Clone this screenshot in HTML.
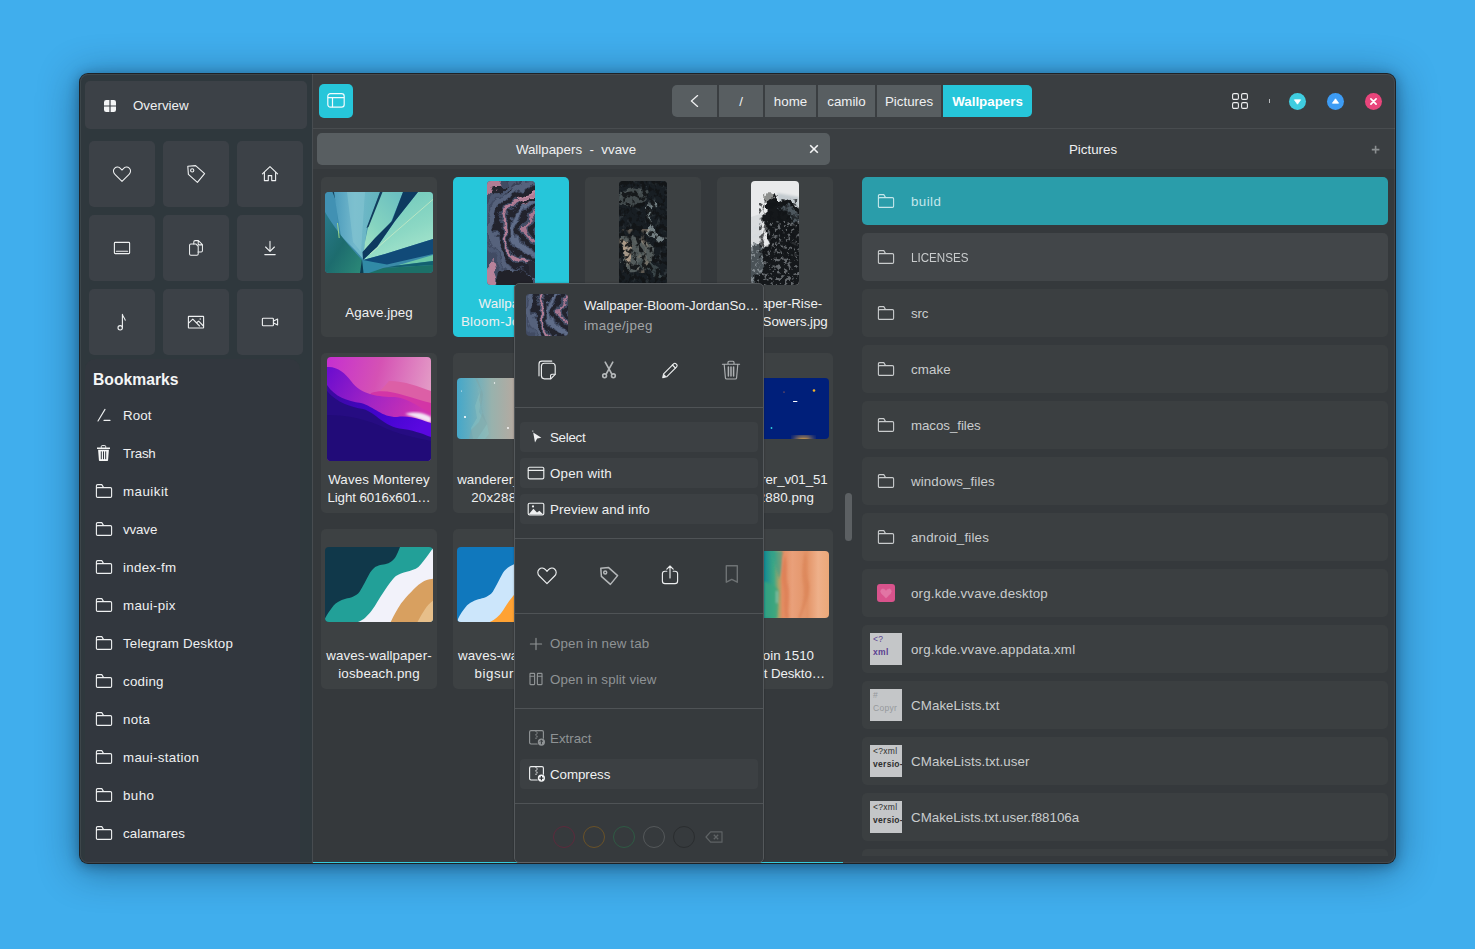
<!DOCTYPE html>
<html lang="en">
<head>
<meta charset="utf-8">
<title>Index - Wallpapers</title>
<style>
*{box-sizing:border-box;margin:0;padding:0}
html,body{width:1475px;height:949px;overflow:hidden}
body{background:#40aeed;font-family:"Liberation Sans",sans-serif;font-size:13.33px;color:#eff0f1;position:relative}
.abs{position:absolute}
#win{position:absolute;left:80px;top:74px;width:1315px;height:789px;border-radius:8px;background:#3a3e41;overflow:hidden;}
#winhl{position:absolute;left:80px;top:74px;width:1315px;height:789px;border-radius:8px;box-shadow:inset 0 0 0 1px rgba(255,255,255,.07);pointer-events:none}
#winshadow{position:absolute;left:79px;top:73px;width:1317px;height:791px;border-radius:9px;background:#1e2226;box-shadow:0 5px 38px 2px rgba(0,25,50,.42),0 2px 12px rgba(0,20,40,.35)}
/* all children of #win positioned in page coords via translate */
#stage{position:absolute;left:-80px;top:-74px;width:1475px;height:949px}
#sidebar{left:80px;top:74px;width:232px;height:789px;background:#2f383d}
#sideline{left:312px;top:74px;width:1px;height:789px;background:#474c50}
.sbtn{position:absolute;background:#3c4147;border-radius:5px}
.sbtn svg{position:absolute;left:22px;top:22px;width:22px;height:22px;overflow:visible}
.ico{fill:none;stroke:#eef0f1;stroke-width:1.12;stroke-linecap:round;stroke-linejoin:round}
.bm{position:absolute;left:123px;height:20px;line-height:22px;white-space:nowrap;color:#eff0f1}
.bmi{position:absolute;left:95px;width:18px;height:18px;overflow:visible}
#hdrline{left:313px;top:128px;width:1082px;height:1px;background:#484c4f}
.crumb{position:absolute;top:85px;height:32px;line-height:34px;background:#585e61;text-align:center;white-space:nowrap;color:#eff0f1}
.card{position:absolute;width:116px;height:160px;background:#3d4143;border-radius:5px}
.lbl{position:absolute;left:0;width:116px;text-align:center;line-height:20px;height:19px;white-space:nowrap;overflow:hidden;color:#eff0f1}
.th{position:absolute;border-radius:4px;overflow:hidden}
.th svg{display:block;width:100%;height:100%}
.row{position:absolute;left:862px;width:526px;height:48px;background:#3b3f41;border-radius:5px}
.row .t{position:absolute;left:49px;top:14px;line-height:22px;height:20px;white-space:nowrap;color:#c9cccd}
.row svg.f{position:absolute;left:15px;top:15px;width:18px;height:18px;overflow:visible}
.fico{fill:none;stroke:#c9cccd;stroke-width:1.1;stroke-linejoin:round;stroke-linecap:round}
.txth{position:absolute;left:8px;top:8px;width:32px;height:32px;background:#c4c6c8;overflow:hidden;font-family:"Liberation Sans",sans-serif;font-size:8.5px;line-height:12.500px;color:#2e2e2e;padding:0 0 0 3px;white-space:nowrap;letter-spacing:.3px}
.txth b{font-weight:700}
#menu{left:514px;top:283px;width:250px;height:580px;background:#363a3d;border:1px solid #54585b;border-radius:5px;box-shadow:0 0 2px rgba(0,0,0,.3)}
.msep{position:absolute;left:515px;width:248px;height:1px;background:#4f5356}
.mrow{position:absolute;left:520px;width:238px;height:30px;border-radius:4px;background:#3c4043}
.mt{position:absolute;left:550px;height:20px;line-height:22px;white-space:nowrap;color:#eff0f1}
.mt.dim{color:#8f9395}
.mi{position:absolute;width:18px;height:18px;overflow:visible}
.mico{fill:none;stroke:#eceeef;stroke-width:1.15;stroke-linecap:round;stroke-linejoin:round}
.dimi{stroke:#8f9395}
.circ{position:absolute;top:826px;width:22px;height:22px;border-radius:50%;border:1px solid #555}
</style>
</head>
<body>
<div id="winshadow"></div>
<div id="win"><div id="stage">

<!-- ===== SIDEBAR ===== -->
<div id="sidebar" class="abs"></div>
<div id="sideline" class="abs"></div>
<div class="abs" style="left:85px;top:359px;width:215px;height:520px;border-radius:10px;background:#32373e"></div>

<div class="sbtn" style="left:85px;top:81px;width:222px;height:48px"></div>
<svg class="abs" style="left:104px;top:100px;width:12px;height:12px" viewBox="0 0 12 12"><g fill="#f4f5f6"><path d="M0 2.2A2.2 2.2 0 0 1 2.2 0H5.4V5.4H0Z"/><path d="M6.6 0H9.8A2.2 2.2 0 0 1 12 2.2V5.4H6.6Z"/><path d="M0 6.6H5.4V12H2.2A2.2 2.2 0 0 1 0 9.8Z"/><path d="M6.6 6.6H12V9.8A2.2 2.2 0 0 1 9.8 12H6.6Z"/></g></svg>
<div class="abs" style="left:133px;top:96px;height:20px;line-height:20px;white-space:nowrap">Overview</div>

<div class="sbtn" style="left:89px;top:141px;width:66px;height:66px"><svg viewBox="0 0 22 22"><path class="ico" transform="translate(11 11.400) scale(.93) translate(-11 -11)" d="M11 18.6 3.4 11C1.3 8.9 1.3 5.9 3.2 4.2 5 2.6 7.8 2.9 9.5 4.7L11 6.3l1.5-1.6c1.7-1.8 4.5-2.1 6.3-.5 1.9 1.7 1.9 4.7-.2 6.8Z"/></svg></div>
<div class="sbtn" style="left:163px;top:141px;width:66px;height:66px"><svg viewBox="0 0 22 22"><path class="ico" d="M2.8 3.2 10.6 2.6 19.6 10.6 12.4 19.4 3.4 11.4Z"/><circle class="ico" cx="7.2" cy="7.4" r="1.6"/></svg></div>
<div class="sbtn" style="left:237px;top:141px;width:66px;height:66px"><svg viewBox="0 0 22 22"><path class="ico" d="M3.400 10.800 11 3.600l7.600 7.200M5.400 9.200v8.400h3.900v-5h3.400v5h3.900V9.200"/></svg></div>

<div class="sbtn" style="left:89px;top:215px;width:66px;height:66px"><svg viewBox="0 0 22 22"><rect class="ico" x="3.400" y="5.400" width="15.200" height="11.200" rx=".8"/><path class="ico" d="M5.400 14.300h11.200"/></svg></div>
<div class="sbtn" style="left:163px;top:215px;width:66px;height:66px"><svg viewBox="0 0 22 22"><g transform="translate(11 11) scale(.92) translate(-11 -11.200)"><path class="ico" d="M8.6 6.8V4.6c0-.8.6-1.4 1.4-1.4h3.6l4.4 4.4v6.6c0 .8-.6 1.4-1.4 1.4h-3.4M13.4 3.4v4.4h4.4"/><path class="ico" d="M5.4 6.8h5.400l2.600 2.600v8.200c0 .8-.6 1.400-1.400 1.400H5.400c-.8 0-1.400-.6-1.400-1.400V8.200c0-.8.6-1.400 1.400-1.400Z"/></g></svg></div>
<div class="sbtn" style="left:237px;top:215px;width:66px;height:66px"><svg viewBox="0 0 22 22"><path class="ico" d="M11 4.400v9.800M6.600 10l4.400 4.400 4.400-4.400M5.800 17.600h10.400"/></svg></div>

<div class="sbtn" style="left:89px;top:289px;width:66px;height:66px"><svg viewBox="0 0 22 22"><circle class="ico" cx="9.200" cy="16.800" r="2.200"/><path class="ico" d="M11.400 16.800V3.400c.4 2.200 2.200 3.400 2.800 5.800"/></svg></div>
<div class="sbtn" style="left:163px;top:289px;width:66px;height:66px"><svg viewBox="0 0 22 22"><rect class="ico" x="3.400" y="5.400" width="15.200" height="11.600" rx=".4"/><path class="ico" d="M3.600 12.200 7.800 8.200l6.800 6.800M11.600 11.800l2.100-1.700 4.700 4.900"/><circle cx="15.200" cy="8" r=".7" fill="#eef0f1"/></svg></div>
<div class="sbtn" style="left:237px;top:289px;width:66px;height:66px"><svg viewBox="0 0 22 22"><rect class="ico" x="3.400" y="7.300" width="11" height="7.400" rx=".8"/><path class="ico" d="M14.600 10 18.600 8v6L14.600 12"/></svg></div>

<div class="abs" style="left:93px;top:368px;height:24px;line-height:24px;font-size:15.7px;font-weight:700;white-space:nowrap;color:#f4f5f6">Bookmarks</div>

<svg class="bmi" style="top:406px" viewBox="0 0 18 18"><path class="ico" d="M3 15 10 3.400M9 14.400h6"/></svg>
<div class="bm" style="letter-spacing:0.09px;top:405px">Root</div>
<svg class="bmi" style="top:444px" viewBox="0 0 18 18"><path fill="#f6f7f7" d="M2 3.600h13v1.500H2ZM3.100 5.800h10.800l-.8 10.200c0 .6-.5 1-1.100 1H5c-.6 0-1.100-.4-1.100-1Z"/><path fill="none" stroke="#f6f7f7" stroke-width="1" d="M6.300 3.800V2.400c0-.5.300-.8.800-.8h2.800c.5 0 .8.300.8.800v1.400"/><path stroke="#32373e" stroke-width="1" d="M6.300 7.400v7.800M8.500 7.400v7.800M10.700 7.400v7.800"/></svg>
<div class="bm" style="letter-spacing:-0.2px;top:443px">Trash</div>
<svg class="bmi" style="top:482px" viewBox="0 0 18 18"><path class="ico" d="M1.400 6.800V3.800c0-.7.500-1.200 1.200-1.200h4.200l1.800 3M2.600 5.600h12.800c.7 0 1.200.5 1.200 1.200v7.400c0 .7-.5 1.200-1.200 1.200H2.600c-.7 0-1.200-.5-1.200-1.200V6.800c0-.7.500-1.200 1.200-1.200Z"/></svg>
<div class="bm" style="letter-spacing:0.47px;top:481px">mauikit</div>
<svg class="bmi" style="top:520px" viewBox="0 0 18 18"><path class="ico" d="M1.400 6.800V3.800c0-.7.500-1.200 1.200-1.200h4.200l1.800 3M2.600 5.600h12.800c.7 0 1.200.5 1.200 1.200v7.400c0 .7-.5 1.200-1.200 1.200H2.600c-.7 0-1.200-.5-1.200-1.200V6.800c0-.7.500-1.200 1.200-1.200Z"/></svg>
<div class="bm" style="letter-spacing:-0.13px;top:519px">vvave</div>
<svg class="bmi" style="top:558px" viewBox="0 0 18 18"><path class="ico" d="M1.400 6.800V3.800c0-.7.500-1.200 1.200-1.200h4.200l1.800 3M2.600 5.600h12.800c.7 0 1.200.5 1.200 1.200v7.400c0 .7-.5 1.200-1.200 1.200H2.600c-.7 0-1.200-.5-1.200-1.200V6.800c0-.7.500-1.200 1.200-1.200Z"/></svg>
<div class="bm" style="letter-spacing:0.29px;top:557px">index-fm</div>
<svg class="bmi" style="top:596px" viewBox="0 0 18 18"><path class="ico" d="M1.400 6.800V3.800c0-.7.500-1.200 1.200-1.200h4.200l1.800 3M2.600 5.600h12.800c.7 0 1.200.5 1.200 1.200v7.400c0 .7-.5 1.200-1.200 1.200H2.600c-.7 0-1.200-.5-1.200-1.200V6.800c0-.7.500-1.200 1.200-1.200Z"/></svg>
<div class="bm" style="letter-spacing:0.3px;top:595px">maui-pix</div>
<svg class="bmi" style="top:634px" viewBox="0 0 18 18"><path class="ico" d="M1.400 6.800V3.800c0-.7.500-1.200 1.200-1.200h4.200l1.800 3M2.600 5.600h12.800c.7 0 1.200.5 1.200 1.200v7.400c0 .7-.5 1.200-1.200 1.200H2.600c-.7 0-1.200-.5-1.200-1.200V6.800c0-.7.500-1.200 1.200-1.200Z"/></svg>
<div class="bm" style="letter-spacing:0.16px;top:633px">Telegram Desktop</div>
<svg class="bmi" style="top:672px" viewBox="0 0 18 18"><path class="ico" d="M1.400 6.800V3.800c0-.7.500-1.200 1.200-1.200h4.200l1.800 3M2.600 5.600h12.800c.7 0 1.200.5 1.200 1.200v7.400c0 .7-.5 1.200-1.200 1.200H2.600c-.7 0-1.200-.5-1.200-1.200V6.800c0-.7.500-1.200 1.200-1.200Z"/></svg>
<div class="bm" style="letter-spacing:0.25px;top:671px">coding</div>
<svg class="bmi" style="top:710px" viewBox="0 0 18 18"><path class="ico" d="M1.400 6.800V3.800c0-.7.500-1.200 1.200-1.200h4.200l1.800 3M2.600 5.600h12.800c.7 0 1.200.5 1.200 1.200v7.400c0 .7-.5 1.200-1.200 1.200H2.600c-.7 0-1.200-.5-1.200-1.200V6.800c0-.7.500-1.200 1.200-1.200Z"/></svg>
<div class="bm" style="letter-spacing:0.31px;top:709px">nota</div>
<svg class="bmi" style="top:748px" viewBox="0 0 18 18"><path class="ico" d="M1.400 6.800V3.800c0-.7.500-1.200 1.200-1.200h4.200l1.800 3M2.600 5.600h12.800c.7 0 1.200.5 1.200 1.200v7.400c0 .7-.5 1.200-1.200 1.200H2.600c-.7 0-1.200-.5-1.200-1.200V6.800c0-.7.500-1.200 1.200-1.200Z"/></svg>
<div class="bm" style="letter-spacing:0.3px;top:747px">maui-station</div>
<svg class="bmi" style="top:786px" viewBox="0 0 18 18"><path class="ico" d="M1.400 6.800V3.800c0-.7.500-1.200 1.200-1.200h4.200l1.800 3M2.600 5.600h12.800c.7 0 1.200.5 1.200 1.200v7.400c0 .7-.5 1.200-1.200 1.200H2.600c-.7 0-1.200-.5-1.200-1.200V6.800c0-.7.500-1.200 1.200-1.200Z"/></svg>
<div class="bm" style="letter-spacing:0.41px;top:785px">buho</div>
<svg class="bmi" style="top:824px" viewBox="0 0 18 18"><path class="ico" d="M1.400 6.800V3.800c0-.7.500-1.200 1.200-1.200h4.200l1.800 3M2.600 5.600h12.800c.7 0 1.200.5 1.200 1.200v7.400c0 .7-.5 1.200-1.200 1.200H2.600c-.7 0-1.200-.5-1.200-1.200V6.800c0-.7.500-1.200 1.200-1.200Z"/></svg>
<div class="bm" style="letter-spacing:0.06px;top:823px">calamares</div>


<!-- ===== HEADER ===== -->
<div id="hdrline" class="abs"></div>
<div class="abs" style="left:319px;top:84px;width:34px;height:34px;border-radius:5px;background:#26c6da"></div>
<svg class="abs" style="left:327px;top:92px;width:18px;height:18px;overflow:visible" viewBox="0 0 18 18"><rect x=".8" y="1.600" width="16.400" height="13.600" rx="2.600" fill="none" stroke="#f2fcfe" stroke-width="1.200"/><path d="M.8 5.600h16.400M5.500 5.600v9.600" fill="none" stroke="#f2fcfe" stroke-width="1.200"/></svg>

<div class="crumb" style="left:672px;width:45px;border-radius:5px 0 0 5px"></div>
<svg class="abs" style="left:687px;top:92px;width:14px;height:18px;overflow:visible" viewBox="0 0 14 18"><path d="M10.600 3.600 4.400 9l6.200 5.400" fill="none" stroke="#eff0f1" stroke-width="1.300" stroke-linecap="round" stroke-linejoin="round"/></svg>
<div class="crumb" style="left:719px;width:44px">/</div>
<div class="crumb" style="left:765px;width:51px">home</div>
<div class="crumb" style="left:818px;width:57px">camilo</div>
<div class="crumb" style="left:877px;width:64px">Pictures</div>
<div class="crumb" style="left:943px;width:89px;background:#26c6da;font-weight:700;border-radius:0 5px 5px 0;color:#fff">Wallpapers</div>

<svg class="abs" style="left:1232px;top:93px;width:16px;height:16px;overflow:visible" viewBox="0 0 16 16"><g fill="none" stroke="#eff0f1" stroke-width="1.100"><rect x=".6" y=".6" width="5.800" height="5.800" rx="1.400"/><rect x="9.600" y=".6" width="5.800" height="5.800" rx="1.400"/><rect x=".6" y="9.600" width="5.800" height="5.800" rx="1.400"/><rect x="9.600" y="9.600" width="5.800" height="5.800" rx="1.400"/></g></svg>
<div class="abs" style="left:1269px;top:99px;width:1px;height:4px;background:#b9bcbe"></div>
<div class="abs" style="left:1289px;top:92.500px;width:17px;height:17px;border-radius:50%;background:#3fcde0"></div>
<svg class="abs" style="left:1289px;top:92.500px;width:17px;height:17px" viewBox="0 0 17 17"><path d="M5.400 6.800h6.200L8.500 11.200Z" fill="#fff" stroke="#fff" stroke-width=".8" stroke-linejoin="round"/></svg>
<div class="abs" style="left:1327px;top:92.500px;width:17px;height:17px;border-radius:50%;background:#3d9cf4"></div>
<svg class="abs" style="left:1327px;top:92.500px;width:17px;height:17px" viewBox="0 0 17 17"><path d="M5.400 10.200h6.200L8.500 5.800Z" fill="#fff" stroke="#fff" stroke-width=".8" stroke-linejoin="round"/></svg>
<div class="abs" style="left:1365px;top:92.500px;width:17px;height:17px;border-radius:50%;background:#e8457b"></div>
<svg class="abs" style="left:1365px;top:92.500px;width:17px;height:17px" viewBox="0 0 17 17"><path d="M5.900 5.900l5.200 5.200M11.100 5.900l-5.200 5.200" fill="none" stroke="#fff" stroke-width="1.700" stroke-linecap="round"/></svg>

<!-- tab bars -->
<div class="abs" style="left:317px;top:133px;width:513px;height:32px;border-radius:5px;background:#585e61"></div>
<div class="abs" style="left:317px;top:140px;width:513px;height:20px;line-height:20px;text-align:center;white-space:pre;padding-left:5px">Wallpapers  -  vvave</div>
<svg class="abs" style="left:809px;top:144px;width:10px;height:10px;overflow:visible" viewBox="0 0 10 10"><path d="M1.200 1.200l7.600 7.600M8.800 1.200l-7.600 7.600" fill="none" stroke="#f4f5f6" stroke-width="1.600" stroke-linecap="butt"/></svg>
<div class="abs" style="left:855px;top:140px;width:476px;height:20px;line-height:20px;text-align:center;white-space:nowrap">Pictures</div>
<svg class="abs" style="left:1371px;top:144.500px;width:9px;height:9px;overflow:visible" viewBox="0 0 9 9"><path d="M4.600 .8v7.600M.8 4.600h7.600" fill="none" stroke="#8b8f91" stroke-width="1.600"/></svg>
<!-- content background (darker) -->
<div class="abs" style="left:313px;top:169px;width:1082px;height:694px;background:#35393c"></div>


<!-- ===== LEFT PANE ===== -->
<svg width="0" height="0" style="position:absolute"><defs>
<filter color-interpolation-filters="sRGB" id="marble" x="0" y="0" width="100%" height="100%"><feTurbulence type="fractalNoise" baseFrequency="0.045 0.03" numOctaves="4" seed="7" result="n"/><feDisplacementMap in="SourceGraphic" in2="n" scale="22" xChannelSelector="R" yChannelSelector="G"/></filter>
<filter color-interpolation-filters="sRGB" id="marble2" x="0" y="0" width="100%" height="100%"><feTurbulence type="fractalNoise" baseFrequency="0.06 0.05" numOctaves="4" seed="3" result="n"/><feDisplacementMap in="SourceGraphic" in2="n" scale="18" xChannelSelector="R" yChannelSelector="G"/></filter>
<filter color-interpolation-filters="sRGB" id="spLight" x="0" y="0" width="100%" height="100%"><feTurbulence type="fractalNoise" baseFrequency="0.16 0.12" numOctaves="3" seed="11"/><feColorMatrix type="matrix" values="0 0 0 0 .5  0 0 0 0 .55  0 0 0 0 .56  6 0 0 0 -3.55"/></filter>
<filter color-interpolation-filters="sRGB" id="spBeige" x="0" y="0" width="100%" height="100%"><feTurbulence type="fractalNoise" baseFrequency="0.1 0.07" numOctaves="3" seed="23"/><feColorMatrix type="matrix" values="0 0 0 0 .72  0 0 0 0 .64  0 0 0 0 .55  0 6 0 0 -3.2"/></filter>
<filter color-interpolation-filters="sRGB" id="spDark" x="0" y="0" width="100%" height="100%"><feTurbulence type="fractalNoise" baseFrequency="0.22 0.18" numOctaves="3" seed="5"/><feColorMatrix type="matrix" values="0 0 0 0 .07  0 0 0 0 .08  0 0 0 0 .09  7 0 0 0 -3.3"/></filter>
<filter color-interpolation-filters="sRGB" id="spWhite" x="0" y="0" width="100%" height="100%"><feTurbulence type="fractalNoise" baseFrequency="0.3 0.26" numOctaves="3" seed="31"/><feColorMatrix type="matrix" values="0 0 0 0 .82  0 0 0 0 .85  0 0 0 0 .87  0 8 0 0 -4.3"/></filter>
<filter color-interpolation-filters="sRGB" id="disp30" x="-10%" y="-10%" width="120%" height="120%"><feTurbulence type="fractalNoise" baseFrequency="0.09 0.07" numOctaves="4" seed="9" result="n"/><feDisplacementMap in="SourceGraphic" in2="n" scale="16" xChannelSelector="R" yChannelSelector="G"/></filter>
<linearGradient id="gRise" gradientUnits="userSpaceOnUse" x1="0" y1="10" x2="52" y2="84"><stop offset="0" stop-color="#eceded"/><stop offset=".3" stop-color="#dfe2e3"/><stop offset=".42" stop-color="#596168"/><stop offset=".52" stop-color="#15181b"/><stop offset="1" stop-color="#0d0f11"/></linearGradient>
<filter id="soft"><feGaussianBlur stdDeviation="1.2"/></filter>
<filter id="soft3"><feGaussianBlur stdDeviation="3"/></filter>
<linearGradient id="gAg1" x1=".8" y1="0" x2=".2" y2="1"><stop offset="0" stop-color="#6cc0c0"/><stop offset=".6" stop-color="#86d4c0"/><stop offset="1" stop-color="#a2e2c4"/></linearGradient><linearGradient id="gAgT" x1="0" y1="0" x2="1" y2="1"><stop offset="0" stop-color="#2a7a8c"/><stop offset=".5" stop-color="#1d6c6e"/><stop offset="1" stop-color="#2c8a78"/></linearGradient>
<linearGradient id="gAg2" x1="0" y1="0" x2="1" y2="0"><stop offset="0" stop-color="#4d9cbc"/><stop offset=".45" stop-color="#72b8cc"/><stop offset="1" stop-color="#62b4bc"/></linearGradient>
<linearGradient id="gAg3" x1=".3" y1="0" x2=".7" y2="1"><stop offset="0" stop-color="#70c8bc"/><stop offset=".6" stop-color="#8cd8c4"/><stop offset="1" stop-color="#a8e6cc"/></linearGradient>
<linearGradient id="gMo1" x1="0" y1="0" x2="1" y2=".25"><stop offset="0" stop-color="#c52fd0"/><stop offset=".5" stop-color="#d552b4"/><stop offset="1" stop-color="#e39ac6"/></linearGradient>
<linearGradient id="gMo2" x1="0" y1="0" x2="1" y2=".4"><stop offset="0" stop-color="#6a0ccf"/><stop offset=".55" stop-color="#a425c3"/><stop offset="1" stop-color="#cf33b0"/></linearGradient>
<linearGradient id="gMo3" x1="0" y1="0" x2="1" y2=".5"><stop offset="0" stop-color="#3a0a9a"/><stop offset=".6" stop-color="#4304cf"/><stop offset="1" stop-color="#5a08e0"/></linearGradient>
<linearGradient id="gWa" x1="0" y1="0" x2="1" y2="0"><stop offset="0" stop-color="#45a7c9"/><stop offset=".16" stop-color="#6cafbd"/><stop offset=".32" stop-color="#98b2ad"/><stop offset=".52" stop-color="#b3aaa1"/><stop offset="1" stop-color="#bba79b"/></linearGradient>
<radialGradient id="gGlow" cx=".56" cy="1.02" r=".3"><stop offset="0" stop-color="#f0b040"/><stop offset=".35" stop-color="#c09048" stop-opacity=".8"/><stop offset="1" stop-color="#00207a" stop-opacity="0"/></radialGradient>
<linearGradient id="gWc" x1="0" y1="0" x2="1" y2="0"><stop offset="0" stop-color="#0b6f82"/><stop offset=".4" stop-color="#128a94"/><stop offset=".49" stop-color="#3fa884"/><stop offset=".535" stop-color="#a9a268"/><stop offset=".57" stop-color="#e38d62"/><stop offset=".66" stop-color="#e9a07a"/><stop offset=".8" stop-color="#e39468"/><stop offset=".9" stop-color="#eeb08a"/><stop offset="1" stop-color="#eba878"/></linearGradient>
</defs></svg>

<!-- row 1 -->
<div class="card" style="left:321px;top:177px"><div class="lbl" style="top:126px;letter-spacing:0.10px">Agave.jpeg</div></div>
<div class="th" style="left:325px;top:192px;width:108px;height:81px"><svg viewBox="0 0 108 81" preserveAspectRatio="none">
<rect width="108" height="81" fill="#3a8aa8"/>
<path d="M0 0H10L14 40 0 22Z" fill="#4191b3"/>
<path d="M7.500 0H10L11 9Z" fill="#14405a"/>
<path d="M9 0H55L42 36 38 67 30 58 16 44 12 20Z" fill="url(#gAg2)"/>
<path d="M22 0H40L36 60 28 50Z" fill="#86c6d2" opacity=".55"/>
<path d="M0 20C8 34 22 52 37 68L35 81H0Z" fill="url(#gAgT)"/>
<path d="M12.500 31 14.200 46" stroke="#a6dc8c" stroke-width=".9"/>
<path d="M38 68 80 60 62 72 46 81H35Z" fill="#318aa6"/>
<path d="M57 0H78L66 30 38 66 40 50 43 35Z" fill="url(#gAg1)"/>
<path d="M55 0H57.500L43.500 35 41.500 36Z" fill="#123c5c"/>
<path d="M93 0H108V47L60 62 38 68 52 55 70 29Z" fill="url(#gAg3)"/>
<path d="M78 0H93L70 29 52 55 38 68 37.500 60 50 46 67 29Z" fill="#0e3a60"/>
<path d="M108 7.400 45 62" stroke="#dcf0c4" stroke-width=".7" opacity=".85"/>
<path d="M108 47V62L62 72.500 48 70 38 68 60 62Z" fill="#114a78"/>
<path d="M108 63V69L72 73.500Z" fill="#6cc8a8"/>
<path d="M108 69V73L58 76 72 73.500Z" fill="#136070"/>
<path d="M108 73V81H44L58 76Z" fill="#1c7068"/>
<path d="M37 67 38.500 81H35Z" fill="#0c3c50"/>
</svg></div>

<div class="card" style="left:453px;top:177px;background:#26c6da"><div class="lbl" style="top:117px;letter-spacing:0.10px">Wallpaper-</div><div class="lbl" style="top:135px;letter-spacing:.3px">Bloom-Jordan…</div></div>
<div class="th" style="left:487px;top:181px;width:48px;height:104px"><svg viewBox="0 0 48 104" preserveAspectRatio="none">
<rect width="48" height="104" fill="#414b63"/>
<g filter="url(#marble2)" fill="none">
<path d="M-4 -4H14L8 12 -4 20Z" fill="#b07c94"/>
<path d="M4 2 20 2 24 10 8 12Z" fill="#24252f"/>
<path d="M22 -2 52 -2V10L30 20Z" fill="#3a4258"/>
<path d="M30 14 50 4V16L34 26Z" fill="#c08aa0"/>
<circle cx="54" cy="48" r="9" stroke="#23242e" stroke-width="5"/>
<circle cx="54" cy="48" r="15" stroke="#a87690" stroke-width="2.500"/>
<circle cx="54" cy="48" r="21" stroke="#22232d" stroke-width="5"/>
<circle cx="54" cy="48" r="27" stroke="#5f6c88" stroke-width="4"/>
<circle cx="54" cy="48" r="32" stroke="#23242e" stroke-width="4"/>
<circle cx="54" cy="48" r="37" stroke="#b07c94" stroke-width="3"/>
<circle cx="54" cy="48" r="43" stroke="#22232d" stroke-width="5"/>
<circle cx="54" cy="48" r="49" stroke="#56627c" stroke-width="5"/>
<circle cx="54" cy="48" r="55" stroke="#4c5872" stroke-width="4"/>
<path d="M12 90C22 86 36 88 44 96V108H10Z" fill="#212129"/>
<path d="M-4 86 6 84 10 108H-4Z" fill="#b8829a"/>
<path d="M40 84 52 80V100L44 96Z" fill="#2a2b36"/>
</g>
</svg></div>

<div class="card" style="left:585px;top:177px"></div>
<div class="th" style="left:619px;top:181px;width:48px;height:104px"><svg viewBox="0 0 48 104" preserveAspectRatio="none">
<rect width="48" height="104" fill="#181e23"/>
<g filter="url(#disp30)">
<path d="M0 10C10 4 24 6 30 12 26 22 10 28 0 24Z" fill="#5f6868" opacity=".6"/>
<path d="M31 18C34 30 30 40 34 46 40 50 46 54 47 60 40 64 30 56 28 44 28 32 30 24 31 18Z" fill="#7e8b8e" opacity=".9"/>
<path d="M2 56C12 52 26 60 38 72 32 88 12 94 2 86Z" fill="#6c7573" opacity=".7"/>
<path d="M4 60C10 58 15 68 13 84 6 86 2 78 2 68Z" fill="#b39f8a" opacity=".9"/>
<path d="M18 78C30 74 42 82 46 94 34 98 24 92 18 86Z" fill="#414c4f" opacity=".85"/>
</g>
<rect width="48" height="104" filter="url(#spLight)" opacity=".2"/>
<rect y="48" width="32" height="44" filter="url(#spBeige)" opacity=".45"/>
<rect width="48" height="104" filter="url(#spDark)" opacity=".9"/>
</svg></div>

<div class="card" style="left:717px;top:177px"><div class="lbl" style="top:117px;letter-spacing:-0.05px">Wallpaper-Rise-</div><div class="lbl" style="top:135px;letter-spacing:-0.09px">JordanSowers.jpg</div></div>
<div class="th" style="left:751px;top:181px;width:48px;height:104px"><svg viewBox="0 0 48 104" preserveAspectRatio="none">
<rect width="48" height="104" fill="#e9eaeb"/>
<path d="M26 12 48 16V40L30 30Z" fill="#c3cacf" filter="url(#soft)"/>
<path d="M0 36 12 32 10 66 0 80Z" fill="#d9dcde"/>
<g filter="url(#disp30)">
<path d="M17 16C20 12 24 12 28 17L52 28V110H-4V98C4 88 9 76 13 62 17 48 14 30 17 16Z" fill="#15181b"/>
<path d="M-4 66C4 60 10 64 14 74 18 88 10 100 -4 104Z" fill="#4a5257"/>
<path d="M30 24C38 22 46 30 50 38 44 44 36 40 30 24Z" fill="#4c565d"/>
<path d="M12 13C16 10 22 11 24 15 20 19 15 18 12 13Z" fill="#8d8f8d"/>
</g>
<rect y="40" width="48" height="64" filter="url(#spWhite)" opacity=".42"/>
<rect x="8" y="18" width="40" height="60" filter="url(#spDark)" opacity=".7"/>
</svg></div>

<!-- row 2 -->
<div class="card" style="left:321px;top:353px"><div class="lbl" style="top:117px;letter-spacing:0.16px">Waves Monterey</div><div class="lbl" style="top:135px;letter-spacing:-0.09px">Light 6016x601…</div></div>
<div class="th" style="left:327px;top:357px;width:104px;height:104px"><svg viewBox="0 0 104 104" preserveAspectRatio="none">
<rect width="104" height="104" fill="url(#gMo1)"/>
<path d="M62 24C78 24 92 30 104 34V60H30Z" fill="#dc5fa6"/>
<path d="M44 36C60 30 80 40 104 46V70H30Z" fill="#d335a6"/>
<path d="M0 10C10 9 18 16 24 24 34 38 52 40 68 40 84 42 94 52 104 56V80H0Z" fill="url(#gMo2)"/>
<path d="M78 57C88 54 98 56 104 60V66C96 64 88 60 78 57Z" fill="#f3e6f6" filter="url(#soft)"/>
<path d="M0 28C8 40 20 44 34 46 48 50 54 60 70 60 84 58 96 64 104 66V90H0Z" fill="url(#gMo3)"/>
<path d="M0 34C10 46 24 50 36 52 50 56 56 70 76 72 90 74 98 78 104 80V104H0Z" fill="#260c82"/>
<path d="M0 58C20 58 40 62 60 72 80 80 96 82 104 84V104H0Z" fill="#210b78"/>
</svg></div>

<div class="card" style="left:453px;top:353px"><div class="lbl" style="top:117px;letter-spacing:0.06px">wanderer_v01_51</div><div class="lbl" style="top:135px;letter-spacing:0.23px">20x2880.png</div></div>
<div class="th" style="left:457px;top:378px;width:108px;height:61px"><svg viewBox="0 0 108 61" preserveAspectRatio="none">
<rect width="108" height="61" fill="url(#gWa)"/>
<path d="M16 61 14 50 20 40 18 28 22 16 20 6 24 22 22 34 30 46 32 56 28 61Z" fill="#8fc4c0" opacity=".45"/>
<path d="M18 0 24 12 22 22 26 34 22 44 14 52 12 61H20L30 46 24 30 26 16 20 0Z" fill="#7fa6a8" opacity=".5"/>
<g fill="#fff"><circle cx="8" cy="39" r="1.100"/><circle cx="37.500" cy="5" r=".7"/><circle cx="51" cy="50" r=".9"/><circle cx="4.500" cy="13" r=".5"/></g>
</svg></div>

<div class="card" style="left:585px;top:353px"></div>

<div class="card" style="left:717px;top:353px"><div class="lbl" style="top:117px;letter-spacing:-0.10px">wanderer_v01_51</div><div class="lbl" style="top:135px;letter-spacing:0.08px">20x2880.png</div></div>
<div class="th" style="left:721px;top:378px;width:108px;height:61px"><svg viewBox="0 0 108 61" preserveAspectRatio="none">
<rect width="108" height="61" fill="#001f7a"/>
<ellipse cx="82.500" cy="62" rx="10" ry="3.500" fill="#e9a83e" filter="url(#soft3)"/><ellipse cx="82.500" cy="62.500" rx="5" ry="1.500" fill="#f2b64a" filter="url(#soft)"/>
<circle cx="93" cy="12.500" r="1.300" fill="#f5b52a"/><circle cx="63" cy="14" r=".6" fill="#f08040"/><path d="M72.500 23.500h3.400" stroke="#fff" stroke-width="1.100" stroke-linecap="round"/><circle cx="50.500" cy="50" r=".9" fill="#30d0e0"/>
</svg></div>

<!-- row 3 -->
<div class="card" style="left:321px;top:529px"><div class="lbl" style="top:117px;letter-spacing:0.11px">waves-wallpaper-</div><div class="lbl" style="top:135px;letter-spacing:0.19px">iosbeach.png</div></div>
<div class="th" style="left:325px;top:547px;width:108px;height:75px"><svg viewBox="0 0 108 75.500" preserveAspectRatio="none">
<rect width="108" height="75.500" fill="#10384a"/>
<path d="M75 0C72 8 70 12 67 14 62 18 58 17 53.600 18.500 49 20 47 23 45 26 41 33 38 40 34.600 45 31 50 25 51 20.700 52 15 53.500 11 56 8.600 59 5 64 2 68 0 72V75.500H108V0Z" fill="#22a098"/>
<path d="M108 1C105 5 102 10 98.500 14 95 19 92 22 88 23 83 25 80 25.500 76 26.600 72 28 69.500 30 67.400 33 64 37 61.500 41 58.800 45 54 52 51 58 46.700 64 42 70 38 74 33 75.500H108Z" fill="#f2f2fa"/>
<path d="M108 32C103 32.500 100 33.500 96.800 35.800 92 39 89 42 86.400 45 82 49 79 53 76 57 72 63 69 69 65.700 75.500H108Z" fill="#d8a060"/>
<path d="M108 54C105 56 102 59 100 62.600 97 67 95 71 92.500 75.500H108Z" fill="#e7bf8a"/>
</svg></div>

<div class="card" style="left:453px;top:529px"><div class="lbl" style="top:117px;letter-spacing:0.14px">waves-wallpaper-</div><div class="lbl" style="top:135px;text-align:left;padding-left:21.600px;letter-spacing:.5px">bigsur.png</div></div>
<div class="th" style="left:457px;top:547px;width:108px;height:75px"><svg viewBox="0 0 108 75.500" preserveAspectRatio="none">
<rect width="108" height="75.500" fill="#1078bd"/>
<path d="M80 0C74 8 66 12 56.500 17.600 51 20 48 23 46 26 42 33 39 40 35.800 45 32 50 27 51 23.700 52 17 53.500 13 56 9.900 59 6 64 3 68 1.200 72L0 75.500H108V0Z" fill="#cce6fb"/>
<path d="M108 10C90 20 70 34 56.500 48.700 52 54 49 59 46 64 42 70 38 73 33 75.500H108Z" fill="#ffa233"/>
</svg></div>

<div class="card" style="left:585px;top:529px"></div>

<div class="card" style="left:717px;top:529px"><div class="lbl" style="top:117px;text-align:right;padding-right:19px">Bitcoin 1510</div><div class="lbl" style="top:135px;text-align:right;padding-right:8px;letter-spacing:-.1px">Abstract Deskto…</div></div>
<div class="th" style="left:721px;top:551px;width:108px;height:67px"><svg viewBox="0 0 108 67" preserveAspectRatio="none">
<rect width="108" height="67" fill="url(#gWc)"/>
<g filter="url(#soft)"><path d="M43 30C48 32 54 34 58 40L56 67H43Z" fill="#3aa67c" opacity=".75"/><path d="M50 0H62C60 10 62 18 58 28 56 20 52 10 50 0Z" fill="#2f9f8c" opacity=".6"/>
<path d="M64 4C68 14 64 24 67 34 70 46 66 56 68 67H64C62 54 64 44 62 34 60 22 62 12 64 4Z" fill="#d9744a" opacity=".55"/>
<path d="M84 0C88 10 84 22 88 32 90 44 84 54 80 67H77C82 54 84 44 82 32 80 20 82 10 84 0Z" fill="#d77e50" opacity=".5"/>
<path d="M56 40V52" stroke="#e8f4ff" stroke-width=".8" opacity=".8"/></g>
</svg></div>

<!-- scrollbar + focus line -->
<div class="abs" style="left:845px;top:493px;width:7px;height:48px;border-radius:4px;background:#5c6063"></div>
<div class="abs" style="left:313px;top:862px;width:530px;height:1px;background:#26c6da"></div>


<!-- ===== RIGHT PANE ===== -->
<div class="row" style="top:177px;background:#2a9daa"><svg class="f" viewBox="0 0 18 18"><path class="fico" style="stroke:#c4e6ea" d="M1.400 6.800V3.800c0-.7.500-1.200 1.200-1.200h4.200l1.800 3M2.600 5.600h12.800c.7 0 1.200.5 1.200 1.200v7.400c0 .7-.5 1.200-1.200 1.200H2.600c-.7 0-1.200-.5-1.200-1.200V6.800c0-.7.500-1.200 1.200-1.200Z"/></svg><div class="t" style="letter-spacing:0.43px;color:#c4e6ea">build</div></div>
<div class="row" style="top:233px;background:#424649"><svg class="f" viewBox="0 0 18 18"><path class="fico" d="M1.400 6.800V3.800c0-.7.500-1.200 1.200-1.200h4.200l1.800 3M2.600 5.600h12.800c.7 0 1.200.5 1.200 1.200v7.400c0 .7-.5 1.200-1.200 1.200H2.600c-.7 0-1.200-.5-1.200-1.200V6.800c0-.7.500-1.200 1.200-1.200Z"/></svg><div class="t" style="transform:scaleX(.871);transform-origin:0 50%">LICENSES</div></div>
<div class="row" style="top:289px"><svg class="f" viewBox="0 0 18 18"><path class="fico" d="M1.400 6.800V3.800c0-.7.500-1.200 1.200-1.200h4.200l1.800 3M2.600 5.600h12.800c.7 0 1.200.5 1.200 1.200v7.400c0 .7-.5 1.200-1.200 1.200H2.600c-.7 0-1.200-.5-1.200-1.200V6.800c0-.7.500-1.200 1.200-1.200Z"/></svg><div class="t" style="letter-spacing:-0.16px">src</div></div>
<div class="row" style="top:345px"><svg class="f" viewBox="0 0 18 18"><path class="fico" d="M1.400 6.800V3.800c0-.7.500-1.200 1.200-1.200h4.200l1.800 3M2.600 5.600h12.800c.7 0 1.200.5 1.200 1.200v7.400c0 .7-.5 1.200-1.200 1.200H2.600c-.7 0-1.200-.5-1.200-1.200V6.800c0-.7.500-1.200 1.200-1.200Z"/></svg><div class="t" style="letter-spacing:0.09px">cmake</div></div>
<div class="row" style="top:401px"><svg class="f" viewBox="0 0 18 18"><path class="fico" d="M1.400 6.800V3.800c0-.7.500-1.200 1.200-1.200h4.200l1.800 3M2.600 5.600h12.800c.7 0 1.200.5 1.200 1.200v7.400c0 .7-.5 1.200-1.200 1.200H2.600c-.7 0-1.200-.5-1.200-1.200V6.800c0-.7.500-1.200 1.200-1.200Z"/></svg><div class="t" style="letter-spacing:-0.07px">macos_files</div></div>
<div class="row" style="top:457px"><svg class="f" viewBox="0 0 18 18"><path class="fico" d="M1.400 6.800V3.800c0-.7.500-1.200 1.200-1.200h4.200l1.800 3M2.600 5.600h12.800c.7 0 1.200.5 1.200 1.200v7.400c0 .7-.5 1.200-1.200 1.200H2.600c-.7 0-1.200-.5-1.200-1.200V6.800c0-.7.500-1.200 1.200-1.200Z"/></svg><div class="t" style="letter-spacing:0.12px">windows_files</div></div>
<div class="row" style="top:513px"><svg class="f" viewBox="0 0 18 18"><path class="fico" d="M1.400 6.800V3.800c0-.7.500-1.200 1.200-1.200h4.200l1.800 3M2.600 5.600h12.800c.7 0 1.200.5 1.200 1.200v7.400c0 .7-.5 1.200-1.200 1.200H2.600c-.7 0-1.200-.5-1.200-1.200V6.800c0-.7.500-1.200 1.200-1.200Z"/></svg><div class="t" style="letter-spacing:0.19px">android_files</div></div>
<div class="row" style="top:569px"><svg class="f" style="left:15px;top:15px" viewBox="0 0 18 18"><rect width="18" height="18" rx="3" fill="#d9538c"/><path d="M9 14.500 4.200 9.700C2.900 8.400 2.900 6.400 4.100 5.300 5.300 4.200 7 4.400 8.100 5.600L9 6.600l.9-1c1.100-1.200 2.800-1.400 4-.3 1.200 1.100 1.200 3.100-.1 4.400Z" fill="#e275a4" stroke="#d9538c" stroke-width=".6" stroke-dasharray="1 1"/></svg><div class="t" style="letter-spacing:0.17px">org.kde.vvave.desktop</div></div>
<div class="row" style="top:625px"><div class="txth" style="color:#5a3f90">&lt;?<br><b>xml</b></div><div class="t" style="letter-spacing:0.2px">org.kde.vvave.appdata.xml</div></div>
<div class="row" style="top:681px"><div class="txth" style="color:#96999c">#<br>Copyr</div><div class="t" style="letter-spacing:0.08px">CMakeLists.txt</div></div>
<div class="row" style="top:737px"><div class="txth">&lt;?xml<br><b>versio-</b></div><div class="t" style="letter-spacing:0.08px">CMakeLists.txt.user</div></div>
<div class="row" style="top:793px"><div class="txth">&lt;?xml<br><b>versio-</b></div><div class="t">CMakeLists.txt.user.f88106a</div></div>
<div class="row" style="top:849px;height:7px;border-radius:5px 5px 0 0"></div>


<!-- ===== MENU ===== -->
<div id="menu" class="abs"></div>
<div class="th" style="left:526px;top:294px;width:42px;height:42px"><svg viewBox="0 28 48 48" preserveAspectRatio="none">
<rect width="48" height="104" fill="#414b63"/>
<g filter="url(#marble2)" fill="none">
<path d="M-4 -4H14L8 12 -4 20Z" fill="#b07c94"/>
<path d="M4 2 20 2 24 10 8 12Z" fill="#24252f"/>
<path d="M22 -2 52 -2V10L30 20Z" fill="#3a4258"/>
<path d="M30 14 50 4V16L34 26Z" fill="#c08aa0"/>
<circle cx="54" cy="48" r="9" stroke="#23242e" stroke-width="5"/>
<circle cx="54" cy="48" r="15" stroke="#a87690" stroke-width="2.500"/>
<circle cx="54" cy="48" r="21" stroke="#22232d" stroke-width="5"/>
<circle cx="54" cy="48" r="27" stroke="#5f6c88" stroke-width="4"/>
<circle cx="54" cy="48" r="32" stroke="#23242e" stroke-width="4"/>
<circle cx="54" cy="48" r="37" stroke="#b07c94" stroke-width="3"/>
<circle cx="54" cy="48" r="43" stroke="#22232d" stroke-width="5"/>
<circle cx="54" cy="48" r="49" stroke="#56627c" stroke-width="5"/>
<circle cx="54" cy="48" r="55" stroke="#4c5872" stroke-width="4"/>
<path d="M12 90C22 86 36 88 44 96V108H10Z" fill="#212129"/>
<path d="M-4 86 6 84 10 108H-4Z" fill="#b8829a"/>
<path d="M40 84 52 80V100L44 96Z" fill="#2a2b36"/>
</g>
</svg></div>
<div class="mt" style="left:584px;top:295px;letter-spacing:-.07px">Wallpaper-Bloom-JordanSo…</div>
<div class="mt" style="left:584px;top:315px;color:#a2a5a7;letter-spacing:.35px">image/jpeg</div>

<!-- action icons row 1 : centers 547,608.5,669.5,731 @ y370 -->
<svg class="mi" style="left:536px;top:359px;width:22px;height:22px" viewBox="0 0 22 22"><path class="mico" d="M3 16.800V5c0-1.600 1.300-2.900 2.900-2.900H15.800"/><path class="mico" d="M8.400 4.200h7.800c1.700 0 3 1.300 3 3v8.200l-4.400 4.400H8.400c-1.700 0-3-1.300-3-3V7.200c0-1.700 1.300-3 3-3Z"/><path class="mico" d="M14.600 19.600v-3c0-.8.600-1.400 1.400-1.400h3"/></svg>
<svg class="mi" style="left:597.500px;top:359px;width:22px;height:22px" viewBox="0 0 22 22"><g class="mico" style="stroke:#b4b7b9;stroke-width:1.600"><path d="M7.200 3.200 13.800 15M14.800 3.200 8.200 15"/><circle cx="6.600" cy="16.800" r="1.900"/><circle cx="15.400" cy="16.800" r="1.900"/></g></svg>
<svg class="mi" style="left:658.500px;top:359px;width:22px;height:22px" viewBox="0 0 22 22"><path class="mico" d="M4.600 14.800 14.600 4.800c.7-.7 1.700-.7 2.400 0l.6.600c.7.700.7 1.700 0 2.400L7.600 17.800 3.800 18.600Z"/><path class="mico" d="M13.400 6l3 3"/><path d="M3.800 18.600l.8-3.800 3 3Z" fill="#e6e8e9"/></svg>
<svg class="mi" style="left:720px;top:359px;width:22px;height:22px" viewBox="0 0 22 22"><g class="mico" style="stroke:#adb0b2"><path d="M2.400 5.200h17.200M8 5V3.200c0-.6.400-1 1-1h4c.6 0 1 .4 1 1V5M4.200 5.400 5.400 18.800c.1.700.6 1.200 1.300 1.200h8.600c.7 0 1.200-.5 1.300-1.200L17.800 5.400"/><path d="M8.400 8v9M11 8v9M13.600 8v9" stroke-width="1.500"/></g></svg>

<div class="msep" style="top:407px"></div>

<div class="mrow" style="top:422px"></div>
<svg class="mi" style="left:528px;top:428px" viewBox="0 0 18 18"><path d="M5.200 4.600 13.400 9.800 9.200 10.600 7 14.600Z" fill="#eff0f1"/><path d="M4.800 2.600v1" stroke="#eff0f1" stroke-width="1" /></svg>
<div class="mt" style="letter-spacing:-0.29px;top:427px">Select</div>

<div class="mrow" style="top:458px"></div>
<svg class="mi" style="left:527px;top:464px" viewBox="0 0 18 18"><rect class="mico" x="1.200" y="3.200" width="15.600" height="11.600" rx="1.400"/><path class="mico" d="M1.400 6.400h15.200"/></svg>
<div class="mt" style="letter-spacing:0.22px;top:463px">Open with</div>

<div class="mrow" style="top:494px"></div>
<svg class="mi" style="left:527px;top:500px" viewBox="0 0 18 18"><rect class="mico" x="1.200" y="3.200" width="15.600" height="11.600" rx="1.400"/><path d="M2 14 6.400 8.800 10 12.600 12.400 10.800 16 14.200Z" fill="#eff0f1"/><circle cx="6" cy="6.400" r="1.100" fill="#eff0f1"/></svg>
<div class="mt" style="letter-spacing:0.08px;top:499px">Preview and info</div>

<div class="msep" style="top:538px"></div>

<!-- action icons row 2 : y 575.5 -->
<svg class="mi" style="left:536px;top:565px;width:22px;height:22px" viewBox="0 0 22 22"><path class="mico" d="M11 18.600 3.400 11C1.300 8.900 1.300 5.900 3.200 4.200 5 2.600 7.800 2.900 9.500 4.700L11 6.300l1.500-1.600c1.700-1.800 4.500-2.100 6.300-.5 1.900 1.700 1.900 4.700-.2 6.800Z"/></svg>
<svg class="mi" style="left:597.500px;top:565px;width:22px;height:22px" viewBox="0 0 22 22"><g class="mico" style="stroke:#b4b7b9;stroke-width:1.500"><path d="M2.800 3.200 10.600 2.600 19.600 10.600 12.400 19.400 3.400 11.400Z"/><circle cx="7.200" cy="7.400" r="1.500"/></g></svg>
<svg class="mi" style="left:658.500px;top:564px;width:22px;height:22px" viewBox="0 0 22 22"><path class="mico" d="M7.800 7.200H6c-1.500 0-2.600 1.100-2.600 2.600v7.200c0 1.500 1.100 2.600 2.600 2.600h10c1.500 0 2.600-1.100 2.600-2.600V9.800c0-1.500-1.100-2.600-2.600-2.600h-1.800M11 14V2.400M7.800 5.200 11 2l3.200 3.200"/></svg>
<svg class="mi" style="left:720px;top:564px;width:22px;height:22px" viewBox="0 0 22 22"><path class="mico" style="stroke:#6e7274;stroke-width:1.400" d="M6.300 1.800h11v16.400l-5.500-2.800-5.500 2.800Z"/></svg>

<div class="msep" style="top:613px"></div>

<svg class="mi" style="left:526.500px;top:634.500px" viewBox="0 0 18 18"><path class="mico dimi" style="stroke-width:1.150" d="M9 3.400v11.200M3.400 9h11.200"/></svg>
<div class="mt dim" style="letter-spacing:0.15px;top:633px">Open in new tab</div>
<svg class="mi" style="left:527px;top:669.800px" viewBox="0 0 18 18"><g class="mico dimi" style="stroke-width:1.150"><rect x="3" y="3.400" width="4.600" height="11.200" rx=".5"/><rect x="10.400" y="3.400" width="4.600" height="11.200" rx=".5"/><path d="M3.200 6.200h4.200M10.600 6.200h4.200"/></g></svg>
<div class="mt dim" style="letter-spacing:0.12px;top:669px">Open in split view</div>

<div class="msep" style="top:708px"></div>

<svg class="mi" style="left:527.500px;top:729.400px" viewBox="0 0 18 18"><g class="mico dimi" style="stroke-width:1.150"><path d="M9.200 15H3c-.8 0-1.400-.6-1.400-1.400V3c0-.8.600-1.400 1.400-1.400h11c.8 0 1.400.6 1.400 1.400v6.200"/><path d="M8 1.800v.8M9 3.600v.8M8 5.400v.8M9 7.200v.8M8 9v.6" stroke-width="1"/></g><circle cx="13.400" cy="13.100" r="3.600" fill="#8f9395"/><path d="M13.400 15.200v-4M11.800 12.700l1.600-1.600 1.600 1.600" fill="none" stroke="#363a3d" stroke-width="1"/></svg>
<div class="mt dim" style="top:728px">Extract</div>

<div class="mrow" style="top:759px"></div>
<svg class="mi" style="left:527.500px;top:765.400px" viewBox="0 0 18 18"><g class="mico" style="stroke-width:1.150"><path d="M9.200 15H3c-.8 0-1.400-.6-1.400-1.400V3c0-.8.600-1.400 1.400-1.400h11c.8 0 1.400.6 1.400 1.400v6.200"/><path d="M8 1.800v.8M9 3.600v.8M8 5.400v.8M9 7.200v.8M8 9v.6" stroke-width="1"/></g><circle cx="13.400" cy="13.100" r="3.600" fill="#f4f5f6"/><path d="M13.400 11v4.200M11.300 13.100h4.200" fill="none" stroke="#2c3033" stroke-width="1.200"/></svg>
<div class="mt" style="letter-spacing:-0.05px;top:764px">Compress</div>

<div class="msep" style="top:803px"></div>

<div class="circ" style="left:553px;border-color:#5c2a3c"></div>
<div class="circ" style="left:583px;border-color:#6a5228"></div>
<div class="circ" style="left:613px;border-color:#2f5a44"></div>
<div class="circ" style="left:643px;border-color:#54585a"></div>
<div class="circ" style="left:673px;border-color:#2a2d2f"></div>
<svg class="mi" style="left:705px;top:828px" viewBox="0 0 18 18"><path d="M1 9 5.600 3.800H17v10.400H5.600Z" fill="none" stroke="#5f6365" stroke-width="1.200" stroke-linejoin="round"/><path d="M8.800 6.800l4.400 4.400M13.200 6.800l-4.400 4.400" stroke="#5f6365" stroke-width="1.300"/></svg>


</div></div>
<div id="winhl"></div>
</body>
</html>
